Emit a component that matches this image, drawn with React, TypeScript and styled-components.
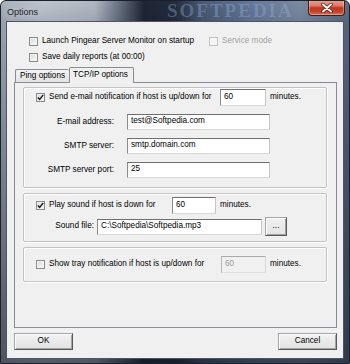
import React from "react";
import styled, { createGlobalStyle } from "styled-components";

const GlobalStyle = createGlobalStyle`
  html, body { margin: 0; padding: 0; background: #ffffff; }
  body {
    font-family: "Liberation Sans", Arial, sans-serif;
    font-size: 8.2px;
    line-height: 1;
    color: #000;
  }
  *, *::before, *::after { box-sizing: border-box; }
`;

const Window = styled.div`
  width: 350px;
  height: 364px;
  display: flex;
  flex-direction: column;
  border: 1px solid #1b212b;
  border-radius: 6px 6px 0 0;
  padding: 0 5px 4px 5px;
  overflow: hidden;
  background:
    linear-gradient(to bottom, rgba(16, 22, 34, 0) 0px, rgba(16, 22, 34, 0.12) 22px, rgba(16, 22, 34, 0.6) 100%),
    linear-gradient(to right, #a9b2be 0%, #bec5ce 12%, #b0b8c3 27%, #5d6777 35%, #1e2535 41%, #232b3d 50%, #4a5a75 58%, #66789a 72%, #7b8ba2 86%, #5e6d84 100%);
`;

const TitleBar = styled.div`
  position: relative;
  height: 20px;
  flex: none;
  display: flex;
  align-items: flex-start;
  padding-left: 1px;
`;

const TitleText = styled.span`
  margin-top: 7px;
  font-size: 9px;
  color: #1a1d22;
  text-shadow: 0 0 6px rgba(255, 255, 255, 0.7);
`;

const TitleWatermark = styled.span`
  position: absolute;
  left: 161px;
  top: 0px;
  font-family: "Liberation Serif", "Times New Roman", serif;
  font-weight: bold;
  font-size: 19px;
  letter-spacing: 2px;
  color: rgba(150, 178, 218, 0.38);
  pointer-events: none;
`;

const CloseButton = styled.div`
  margin-left: auto;
  margin-top: -1px;
  margin-right: -1px;
  width: 37px;
  height: 16px;
  border: 1px solid #4a1912;
  border-top: none;
  border-radius: 0 0 4px 4px;
  background: linear-gradient(to bottom, #eaa697 0%, #d77866 40%, #c0351f 52%, #c5462c 80%, #d9745c 100%);
  box-shadow: inset 0 0 0 1px rgba(255, 255, 255, 0.3);
  display: flex;
  align-items: center;
  justify-content: center;
`;

const Client = styled.div`
  flex: 1;
  display: flex;
  flex-direction: column;
  background: #f0f0f0;
  border: 1px solid #4b5566;
  padding: 13px 0 8px 0;
`;

const TopOptions = styled.div`
  display: grid;
  grid-template-columns: 180px auto;
  grid-auto-rows: 12px;
  row-gap: 4px;
  padding-left: 22px;
`;

const CheckItem = styled.label<{ $disabled?: boolean }>`
  display: flex;
  align-items: center;
  gap: 4px;
  white-space: nowrap;
  color: ${(p) => (p.$disabled ? "#a2a2a2" : "#000")};
`;

const Box = styled.span<{ $disabled?: boolean }>`
  flex: none;
  width: 9px;
  height: 9px;
  border: 1px solid ${(p) => (p.$disabled ? "#c2c2c2" : "#8a8b8c")};
  background: ${(p) =>
    p.$disabled ? "#f4f4f4" : "linear-gradient(135deg, #d3d5d9 0%, #eeeeee 60%, #fafafa 100%)"};
  box-shadow: inset 0 0 0 1px ${(p) => (p.$disabled ? "#f7f7f7" : "#f3f3f3")};
  display: flex;
  align-items: center;
  justify-content: center;
`;

const TabStrip = styled.div`
  margin-top: 4px;
  height: 15px;
  display: flex;
  align-items: flex-end;
  padding-left: 8px;
`;

const Tab = styled.div<{ $active?: boolean }>`
  position: relative;
  z-index: ${(p) => (p.$active ? 2 : 1)};
  width: ${(p) => (p.$active ? 65 : 54)}px;
  height: ${(p) => (p.$active ? 16 : 13)}px;
  margin-bottom: ${(p) => (p.$active ? -1 : 0)}px;
  border: 1px solid #898c95;
  border-bottom: none;
  border-right: ${(p) => (p.$active ? "1px solid #898c95" : "none")};
  border-radius: 2px 2px 0 0;
  background: ${(p) => (p.$active ? "#f0f0f0" : "linear-gradient(#f3f3f3, #e2e2e2)")};
  display: flex;
  align-items: center;
  padding-left: ${(p) => (p.$active ? 3 : 4)}px;
  white-space: nowrap;
`;

const Panel = styled.div`
  margin-left: 7px;
  width: 323px;
  height: 246px;
  flex: none;
  border: 1px solid #898c95;
  background: #f0f0f0;
  padding: 4px 0 0 8px;
  display: flex;
  flex-direction: column;
  gap: 5px;
`;

const GroupBox = styled.div<{ $h: number }>`
  width: 304px;
  height: ${(p) => p.$h}px;
  flex: none;
  border: 1px solid #c3c3c3;
  border-radius: 2px;
  box-shadow: inset 1px 1px 0 #ffffff, 1px 1px 0 #ffffff;
  display: flex;
  flex-direction: column;
`;

const Row = styled.div<{ $h: number; $top: number; $pad?: number; $gap?: number }>`
  height: ${(p) => p.$h}px;
  margin-top: ${(p) => p.$top}px;
  padding-left: ${(p) => p.$pad ?? 0}px;
  display: flex;
  align-items: center;
  gap: ${(p) => p.$gap ?? 4}px;
  flex: none;
  white-space: nowrap;
`;

const Fields = styled.div`
  margin-top: 8px;
  display: flex;
  flex-direction: column;
  gap: 8px;
`;

const Caption = styled.span<{ $w: number; $right?: boolean }>`
  width: ${(p) => p.$w}px;
  flex: none;
  text-align: ${(p) => (p.$right ? "right" : "left")};
  white-space: nowrap;
`;

const TextBox = styled.div<{ $w: number; $h: number; $disabled?: boolean }>`
  width: ${(p) => p.$w}px;
  height: ${(p) => p.$h}px;
  flex: none;
  border: 1px solid;
  border-color: ${(p) =>
    p.$disabled ? "#a9a9a9 #d6d6d6 #dedede #b7b7b7" : "#6f6f6f #c6c6c6 #d8d8d8 #8b8b8b"};
  background: ${(p) => (p.$disabled ? "#f0f0f0" : "#ffffff")};
  color: ${(p) => (p.$disabled ? "#9c9c9c" : "#000")};
  padding: 0 0 1px 3px;
  display: flex;
  align-items: center;
  white-space: nowrap;
  overflow: hidden;
`;

const PushButton = styled.button<{ $w: number; $h: number }>`
  width: ${(p) => p.$w}px;
  height: ${(p) => p.$h}px;
  flex: none;
  padding: 0;
  margin: 0;
  font-family: inherit;
  font-size: 8.2px;
  line-height: 1;
  color: #000;
  border: 1px solid;
  border-color: #a6a6a6 #585858 #585858 #a6a6a6;
  border-radius: 0;
  box-shadow: inset 1px 1px 0 #fdfdfd, inset -1px -1px 0 #a3a3a3;
  background: linear-gradient(#f1f1f1, #e3e3e3);
  display: flex;
  align-items: center;
  justify-content: center;
`;

const ButtonRow = styled.div`
  margin-top: 5px;
  padding: 0 6px 0 7px;
  display: flex;
  justify-content: space-between;
`;

const Check = ({ checked }: { checked?: boolean }) => (
  <svg width="7" height="7" viewBox="0 0 7 7">
    {checked && (
      <path d="M0.8 3.4 L2.7 5.4 L6.2 0.9" fill="none" stroke="#1d1d1d" strokeWidth="1.5" />
    )}
  </svg>
);

const CheckBox = ({ checked, disabled }: { checked?: boolean; disabled?: boolean }) => (
  <Box $disabled={disabled}>
    <Check checked={checked} />
  </Box>
);

const CloseGlyph = () => (
  <svg width="12" height="10" viewBox="0 0 12 10">
    <path d="M2 1.5 L10 8.5 M10 1.5 L2 8.5" stroke="#5a1a10" strokeWidth="3.6" strokeLinecap="round" />
    <path d="M2 1.5 L10 8.5 M10 1.5 L2 8.5" stroke="#ffffff" strokeWidth="2" strokeLinecap="round" />
  </svg>
);

export default function App() {
  return (
    <>
      <GlobalStyle />
      <Window>
        <TitleBar>
          <TitleText>Options</TitleText>
          <TitleWatermark>SOFTPEDIA</TitleWatermark>
          <CloseButton>
            <CloseGlyph />
          </CloseButton>
        </TitleBar>
        <Client>
          <TopOptions>
            <CheckItem>
              <CheckBox />
              Launch Pingear Server Monitor on startup
            </CheckItem>
            <CheckItem $disabled>
              <CheckBox disabled />
              Service mode
            </CheckItem>
            <CheckItem>
              <CheckBox />
              Save daily reports (at 00:00)
            </CheckItem>
          </TopOptions>

          <TabStrip>
            <Tab>Ping options</Tab>
            <Tab $active>TCP/IP options</Tab>
          </TabStrip>

          <Panel>
            <GroupBox $h={101}>
              <Row $h={17} $top={1} $pad={12}>
                <CheckBox checked />
                <Caption $w={167}>Send e-mail notification if host is up/down for</Caption>
                <TextBox $w={46} $h={17}>60</TextBox>
                <span>minutes.</span>
              </Row>
              <Fields>
                <Row $h={16} $top={0} $gap={13}>
                  <Caption $w={90} $right>E-mail address:</Caption>
                  <TextBox $w={143} $h={16}>test@Softpedia.com</TextBox>
                </Row>
                <Row $h={16} $top={0} $gap={13}>
                  <Caption $w={90} $right>SMTP server:</Caption>
                  <TextBox $w={143} $h={16}>smtp.domain.com</TextBox>
                </Row>
                <Row $h={16} $top={0} $gap={13}>
                  <Caption $w={90} $right>SMTP server port:</Caption>
                  <TextBox $w={143} $h={16}>25</TextBox>
                </Row>
              </Fields>
            </GroupBox>

            <GroupBox $h={49}>
              <Row $h={17} $top={3} $pad={12}>
                <CheckBox checked />
                <Caption $w={119}>Play sound if host is down for</Caption>
                <TextBox $w={44} $h={17}>60</TextBox>
                <span>minutes.</span>
              </Row>
              <Row $h={19} $top={3} $gap={3}>
                <Caption $w={70} $right>Sound file:</Caption>
                <TextBox $w={165} $h={16}>C:\Softpedia\Softpedia.mp3</TextBox>
                <PushButton $w={22} $h={19}>...</PushButton>
              </Row>
            </GroupBox>

            <GroupBox $h={35}>
              <Row $h={17} $top={8} $pad={12}>
                <CheckBox />
                <Caption $w={168}>Show tray notification if host is up/down for</Caption>
                <TextBox $w={45} $h={17} $disabled>60</TextBox>
                <span>minutes.</span>
              </Row>
            </GroupBox>
          </Panel>

          <ButtonRow>
            <PushButton $w={59} $h={17}>OK</PushButton>
            <PushButton $w={59} $h={17}>Cancel</PushButton>
          </ButtonRow>
        </Client>
      </Window>
    </>
  );
}
